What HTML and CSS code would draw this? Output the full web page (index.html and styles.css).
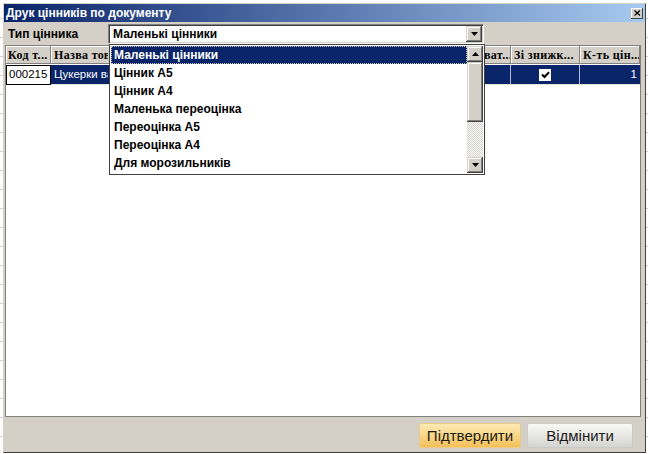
FILE: index.html
```html
<!DOCTYPE html>
<html lang="uk">
<head>
    <meta charset="UTF-8">
    <title>Друк цінників по документу</title>
    <link rel="stylesheet" href="styles.css">
</head>
<body>
    <div class="window">
        <div class="titlebar">
            <span class="title">Друк цінників по документу</span>
            <span class="close">
                <svg width="7" height="6" viewBox="0 0 7 6"><path d="M0.5 0.5 L6 5.5 M6 0.5 L0.5 5.5" stroke="#000" stroke-width="1.2"/></svg>
            </span>
        </div>

        <div class="content">
            <div class="type-row">
                <span class="type-label">Тип цінника</span>
                <div class="combo">
                    <span class="combo-value">Маленькі цінники</span>
                    <span class="sb-btn combo-btn">
                        <svg width="7" height="4" viewBox="0 0 7 4"><polygon points="0,0 7,0 3.5,4" fill="#000"/></svg>
                    </span>
                </div>
            </div>

            <div class="grid">
                <div class="grid-head">
                    <div class="hcell hcell-first">Код т...</div>
                    <div class="hcell"><span class="clip">Назва товару</span></div>
                    <div class="hcell"></div>
                    <div class="hcell hcell-tail">ват...</div>
                    <div class="hcell">Зі знижк...</div>
                    <div class="hcell">К-ть цін...</div>
                </div>
                <div class="grid-row">
                    <div class="cell cell-edit">000215</div>
                    <div class="cell"><span class="clip">Цукерки вафельні</span></div>
                    <div class="cell"></div>
                    <div class="cell"></div>
                    <div class="cell cell-check">
                        <span class="checkbox">
                            <svg width="9" height="8" viewBox="0 0 9 8"><path d="M1 3.5 L3.5 6 L8 1.2" stroke="#000" stroke-width="2" fill="none"/></svg>
                        </span>
                    </div>
                    <div class="cell cell-num">1</div>
                </div>
            </div>

            <div class="footer">
                <button class="btn btn-ok">Підтвердити</button>
                <button class="btn btn-cancel">Відмінити</button>
            </div>
        </div>

        <!-- відкритий список типів цінника -->
        <div class="dropdown">
            <div class="list">
                <div class="item active">Маленькі цінники</div>
                <div class="item">Цінник А5</div>
                <div class="item">Цінник А4</div>
                <div class="item">Маленька переоцінка</div>
                <div class="item">Переоцінка А5</div>
                <div class="item">Переоцінка А4</div>
                <div class="item">Для морозильників</div>
            </div>
            <div class="scrollbar">
                <span class="sb-btn">
                    <svg width="7" height="4" viewBox="0 0 7 4"><polygon points="0,4 7,4 3.5,0" fill="#000"/></svg>
                </span>
                <span class="sb-btn sb-thumb"></span>
                <span class="sb-track"></span>
                <span class="sb-btn">
                    <svg width="7" height="4" viewBox="0 0 7 4"><polygon points="0,0 7,0 3.5,4" fill="#000"/></svg>
                </span>
            </div>
        </div>
    </div>
</body>
</html>
```

FILE: styles.css
```css
body {
    margin: 0;
    padding: 3px 0 0 3px;
    box-sizing: border-box;
    width: 648px;
    height: 454px;
    overflow: hidden;
    background: #fff repeating-linear-gradient(to bottom, transparent 0 18px, #d0d0d0 18px 19px);
    font-family: "Liberation Sans", Arial, sans-serif;
}

.window {
    position: relative;
    box-sizing: border-box;
    width: 643px;
    height: 450px;
    border: 1px solid;
    border-color: #d4d0c8 #404040 #404040 #d4d0c8;
    background: #d4d0c8;
    display: flex;
    flex-direction: column;
}

/* Заголовок вікна */
.titlebar {
    height: 18px;
    flex-shrink: 0;
    display: flex;
    align-items: center;
    justify-content: space-between;
    padding: 0 2px 0 2px;
    background: linear-gradient(to right, #0a246a, #a6caf0);
    color: #fff;
    font-weight: bold;
    font-size: 12px;
}

.close {
    width: 12px;
    height: 11px;
    box-sizing: border-box;
    background: #d4d0c8;
    box-shadow: inset -1px -1px #404040, inset 1px 1px #fff;
    display: flex;
    align-items: center;
    justify-content: center;
}

.content {
    flex: 1;
    display: flex;
    flex-direction: column;
    padding: 0 4px 0 1px;
}

/* Тип цінника */
.type-row {
    height: 23px;
    display: flex;
    align-items: flex-start;
}

.type-label {
    width: 103px;
    box-sizing: border-box;
    padding: 5px 0 0 3px;
    line-height: 14px;
    font-size: 12px;
    font-weight: bold;
}

.combo {
    margin-top: 2px;
    width: 376px;
    height: 20px;
    box-sizing: border-box;
    border: 1px solid;
    border-color: #808080 #fff #fff #808080;
    box-shadow: inset 1px 1px #404040, inset -1px -1px #d4d0c8;
    background: #fff;
    display: flex;
    align-items: center;
    justify-content: space-between;
    padding: 1px 1px 1px 4px;
    font-size: 12px;
    font-weight: bold;
}

.sb-btn {
    width: 16px;
    height: 16px;
    flex-shrink: 0;
    box-sizing: border-box;
    background: #d4d0c8;
    box-shadow: inset -1px -1px #404040, inset 1px 1px #d4d0c8, inset -2px -2px #808080, inset 2px 2px #fff;
    display: flex;
    align-items: center;
    justify-content: center;
}

/* Таблиця */
.grid {
    height: 372px;
    box-sizing: border-box;
    border: 1px solid #808080;
    background: #fff;
}

.grid-head,
.grid-row {
    display: grid;
    grid-template-columns: 45px 249px 151px 60px 69px 60px;
}

.hcell {
    height: 18px;
    box-sizing: border-box;
    border-right: 1px solid #808080;
    border-bottom: 1px solid #808080;
    box-shadow: inset 1px 1px #fff;
    background: #d4d0c8;
    padding-left: 3px;
    font-family: "Liberation Serif", "Times New Roman", serif;
    font-weight: bold;
    font-size: 12px;
    letter-spacing: 0.35px;
    line-height: 18px;
    white-space: nowrap;
    overflow: hidden;
}

.hcell-first {
    padding-left: 2px;
}

/* колонка частково закрита списком, видно лише хвіст */
.hcell-tail {
    padding-left: 33px;
}

/* текст під списком обрізається по його лівому краю */
.clip {
    display: block;
    width: 54px;
    overflow: hidden;
}

.grid-row {
    height: 20px;
    margin-top: 1px;
}

.cell {
    box-sizing: border-box;
    background: #0a246a;
    color: #fff;
    border-right: 1px solid #b8bcd0;
    border-bottom: 1px solid #e8e4d8;
    padding: 0 3px;
    font-size: 11.5px;
    line-height: 18px;
    white-space: nowrap;
    overflow: hidden;
}

.cell-edit {
    background: #fff;
    color: #000;
    border: 1px solid #000;
    padding-left: 2px;
    line-height: 17px;
}

.cell-check {
    display: flex;
    align-items: center;
    justify-content: center;
}

.checkbox {
    width: 12px;
    height: 12px;
    background: #fff;
    display: flex;
    align-items: center;
    justify-content: center;
}

.cell-num {
    text-align: right;
    padding-right: 3px;
    border-right: none;
}

/* Кнопки */
.footer {
    flex: 1;
    display: flex;
    justify-content: flex-end;
    align-items: flex-start;
    gap: 6px;
    padding: 6px 8px 0 0;
}

.btn {
    height: 25px;
    padding: 0;
    border-radius: 2px;
    font-family: "Liberation Sans", Arial, sans-serif;
    font-size: 15px;
    color: #1a1a1a;
}

.btn-ok {
    width: 102px;
    background: linear-gradient(#fdeab4, #f8d27e 60%, #f3c05a);
    border: 1px solid #eccb86;
}

.btn-cancel {
    width: 106px;
    background: linear-gradient(#f8f8f6, #e4e4e0 60%, #d4d4d0);
    border: 1px solid #cacac6;
}

/* Список, що випадає */
.dropdown {
    position: absolute;
    left: 105px;
    top: 40px;
    width: 376px;
    height: 131px;
    box-sizing: border-box;
    border: 1px solid #404040;
    background: #fff;
    padding: 1px;
    display: flex;
}

.list {
    flex: 1;
}

.item {
    height: 18px;
    line-height: 18px;
    padding-left: 3px;
    font-size: 12px;
    font-weight: bold;
    white-space: nowrap;
}

.item.active {
    background: #0a246a;
    color: #fff;
    outline: 1px dotted #c8c4b0;
    outline-offset: -1px;
}

.scrollbar {
    width: 16px;
    display: flex;
    flex-direction: column;
}

.sb-thumb {
    height: 60px;
}

.sb-track {
    flex: 1;
    background: repeating-conic-gradient(#d4d0c8 0 25%, #fff 0 50%) 0 0 / 2px 2px;
}
```
